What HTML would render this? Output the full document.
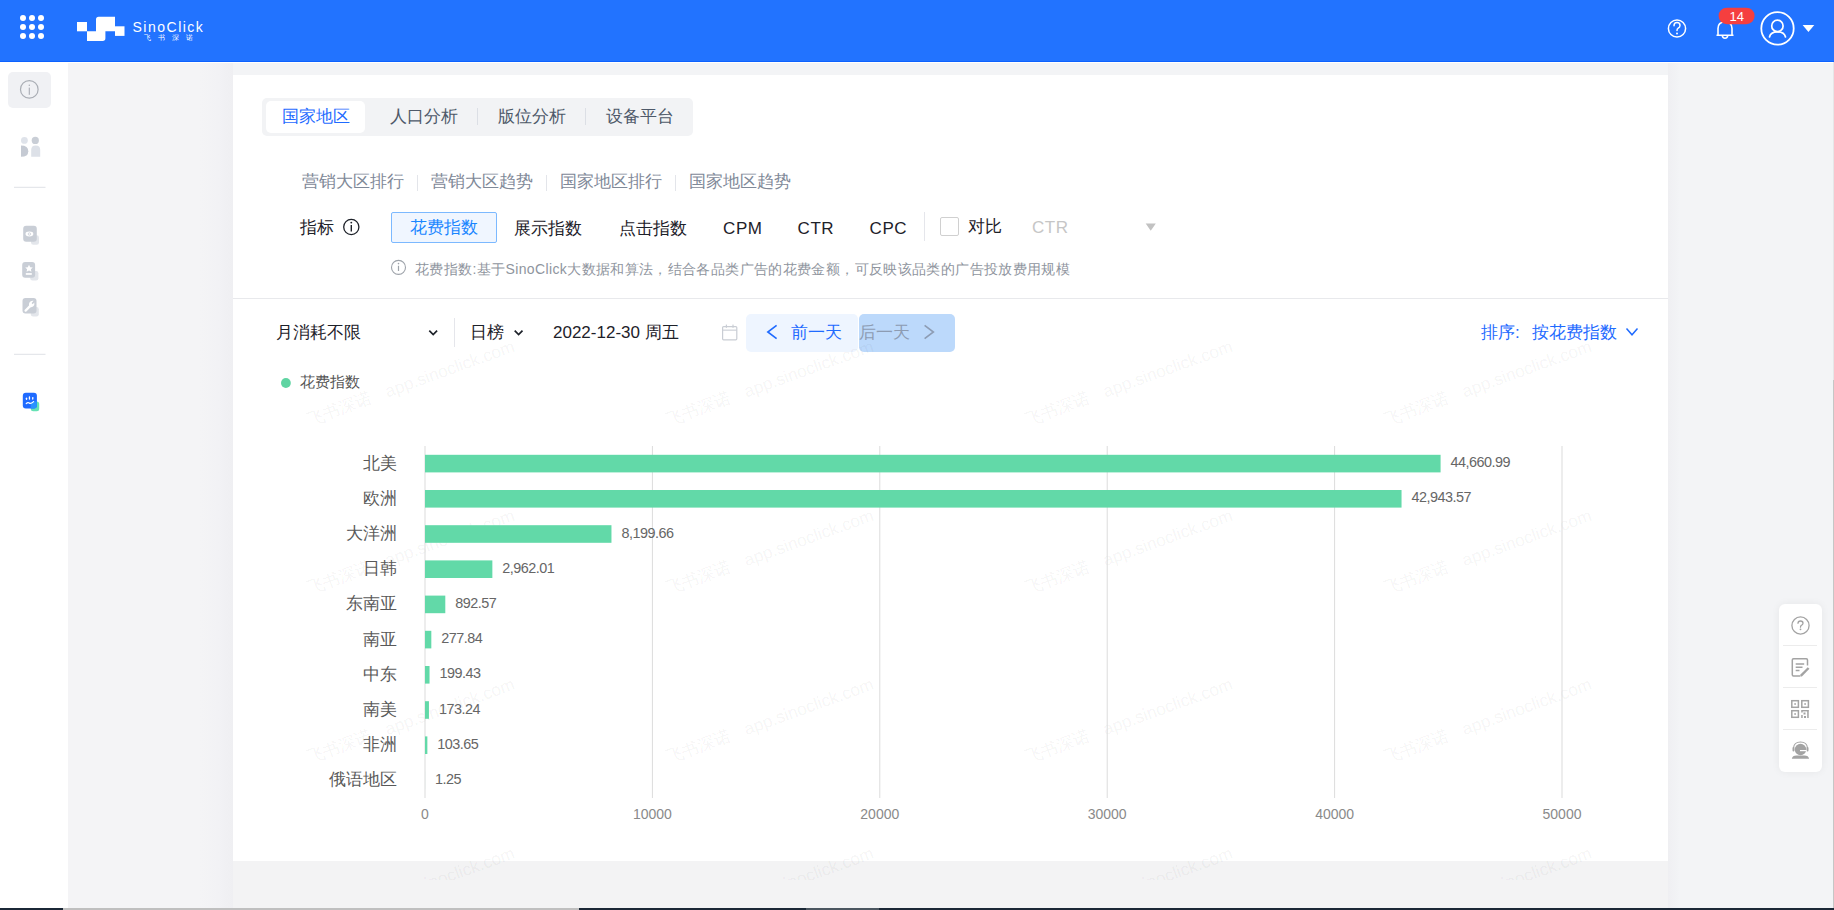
<!DOCTYPE html>
<html><head><meta charset="utf-8">
<style>
*{box-sizing:border-box;margin:0;padding:0}
html,body{width:1834px;height:910px;overflow:hidden;background:#f3f4f6;font-family:"Liberation Sans",sans-serif;color:#1d2129}
.a{position:absolute}
#hdr{left:0;top:0;width:1834px;height:62px;background:#2273ff;border-bottom:1px solid #0d62ff}
#side{left:0;top:62px;width:68px;height:848px;background:#fff}
#strip{left:68px;top:63px;width:165px;height:845px;background:linear-gradient(to right,#f4f4f6 0,#f4f4f6 132px,#f2f2f5 150px,#efeff2 165px)}
#wline{left:0;top:62px;width:1834px;height:1px;background:#fff}
#card{left:233px;top:75px;width:1435px;height:786px;background:#fff}
.t{position:absolute;white-space:nowrap;line-height:1}
svg{position:absolute;overflow:visible}
</style></head><body>
<!-- HEADER -->
<div id="hdr" class="a">
  <svg style="left:0;top:0" width="260" height="62">
    <g fill="#fff">
      <circle cx="23" cy="18" r="3"/><circle cx="32" cy="18" r="3"/><circle cx="41" cy="18" r="3"/>
      <circle cx="23" cy="27" r="3"/><circle cx="32" cy="27" r="3"/><circle cx="41" cy="27" r="3"/>
      <circle cx="23" cy="36" r="3"/><circle cx="32" cy="36" r="3"/><circle cx="41" cy="36" r="3"/>
      <rect x="77" y="22" width="10" height="9.3"/>
      <path d="M87 31.2 H96 V19.5 Q96 16.8 98.7 16.8 H115 V31.2 H105.4 V38.3 Q105.4 41 102.7 41 H87 Z"/>
      <rect x="115" y="26.3" width="9.5" height="9.6"/>
    </g>
  </svg>
  <div class="t" style="left:132.5px;top:20.4px;font-size:14px;color:#fff;letter-spacing:1.5px">SinoClick</div>
  <div class="t" style="left:143.5px;top:34px;font-size:7px;color:#fff;letter-spacing:7.1px">飞书深诺</div>
  <svg style="left:1640px;top:0" width="194" height="62">
    <circle cx="37" cy="28.5" r="8.6" fill="none" stroke="#fff" stroke-width="1.5"/>
    <path d="M34 25.8 Q34 22.6 37 22.6 Q40 22.6 40 25.6 Q40 27.4 38 28.3 Q37 28.8 37 30.4" fill="none" stroke="#fff" stroke-width="1.5" stroke-linecap="round"/>
    <circle cx="37" cy="33.6" r="1" fill="#fff"/>
    <path d="M78 35.3 V28.5 Q78 22 85 22 Q92 22 92 28.5 V35.3 H93.5 M76.5 35.3 H93.5" fill="none" stroke="#fff" stroke-width="1.6" stroke-linejoin="round"/>
    <path d="M82.3 35.5 Q82.5 38.2 85 38.2 Q87.5 38.2 87.7 35.5" fill="none" stroke="#fff" stroke-width="1.6"/>
    <rect x="78.6" y="7.7" width="36" height="16.5" rx="8.25" fill="#f53f3f"/>
    <circle cx="137.5" cy="28.4" r="16.2" fill="none" stroke="#fff" stroke-width="1.8"/>
    <circle cx="137.4" cy="25.9" r="5.7" fill="none" stroke="#fff" stroke-width="1.7"/>
    <path d="M129.5 37 Q130.5 31.8 137.4 31.8 Q144.4 31.8 145.5 37" fill="none" stroke="#fff" stroke-width="1.7" stroke-linecap="round"/>
    <path d="M162.6 24.9 H174.3 L168.45 31.9 Z" fill="#fff"/>
  </svg>
  <div class="t" style="left:1729.5px;top:9.5px;font-size:13px;color:#fff">14</div>
</div>
<div id="side" class="a">
  <div class="a" style="left:8px;top:10px;width:43px;height:36px;background:#f0f1f4;border-radius:5px"></div>
  <svg style="left:0;top:0" width="68" height="400">
    <circle cx="29.3" cy="27.4" r="8.8" fill="none" stroke="#a9adb4" stroke-width="1.2"/>
    <rect x="28.75" y="25.6" width="1.1" height="7.2" fill="#a9adb4"/>
    <circle cx="29.3" cy="23.2" r="0.7" fill="#a9adb4"/>
    <!-- people icon -->
    <circle cx="24.4" cy="78.4" r="3.4" fill="#dfe3ea"/>
    <circle cx="35.3" cy="78.4" r="3.6" fill="#c9ced6"/>
    <path d="M21 83.6 Q28.3 83.6 28.3 89.2 Q28.3 94.8 21 94.8 Z" fill="#c5cad3"/>
    <path d="M31.2 87.8 Q31.2 83.4 35.7 83.4 Q40.2 83.4 40.2 87.8 V94.8 H31.2 Z" fill="#dde1e8"/>
    <rect x="14" y="124.8" width="31.5" height="1" fill="#dfe2e7"/>
    <!-- eye doc -->
    
    <rect x="31" y="173.2" width="8" height="9.6" rx="2.3" fill="#e3e6eb"/>
    <rect x="23.2" y="163.7" width="13.6" height="16.1" rx="3" fill="#c9ced6"/>
    <ellipse cx="29.4" cy="172" rx="3.9" ry="2.4" fill="#fff"/>
    <circle cx="29.4" cy="172" r="1.2" fill="none" stroke="#c9ced6" stroke-width="0.8"/>
    <!-- star doc -->
    <rect x="30.2" y="209" width="8.2" height="9.5" rx="2.3" fill="#e3e6eb"/>
    <rect x="22.2" y="200" width="12.9" height="15.7" rx="3" fill="#c9ced6"/>
    <path d="M29 202.8 L30.2 205.3 L32.8 205.6 L30.9 207.3 L31.4 209.8 L29 208.5 L26.6 209.8 L27.1 207.3 L25.2 205.6 L27.8 205.3 Z" fill="#fff"/>
    <rect x="25.8" y="211.1" width="6" height="1.7" fill="#fff"/>
    <!-- wrench doc -->
    <rect x="30.8" y="245" width="8" height="9.6" rx="2.3" fill="#e3e6eb"/>
    <rect x="22.5" y="236" width="14" height="15.5" rx="3" fill="#c9ced6"/>
    <path d="M25.6 248.6 L29.8 244.4" fill="none" stroke="#fff" stroke-width="2.3" stroke-linecap="round"/><path d="M29.3 245 Q28.2 241.6 30.4 239.6 Q32 238.3 33.6 238.8 L31.6 240.9 L32.6 242.2 L34.3 240.6 Q34.8 242.8 33.3 244.3 Q31.5 245.9 29.3 245 Z" fill="#fff"/>
    <rect x="14" y="291.8" width="31.5" height="1" fill="#dfe2e7"/>
    <!-- face icon -->
    <rect x="30.8" y="339.6" width="8.4" height="9.6" rx="2.5" fill="#66e2b4"/>
    <rect x="22.8" y="330.8" width="14.1" height="15.8" rx="3" fill="#1f6bff"/>
    <path d="M30.8 342.1 Q30.8 339.6 33.3 339.6 H36.9 V343.6 Q36.9 346.6 33.9 346.6 H30.8 Z" fill="#2892ff"/>
    <rect x="25.8" y="335.6" width="1.4" height="2.3" rx="0.7" fill="#fff"/>
    <rect x="28.8" y="334.3" width="1.3" height="3.4" rx="0.6" fill="#fff"/>
    <rect x="32.1" y="334.9" width="1.3" height="2.8" rx="0.6" fill="#fff"/>
    <path d="M26.2 341.6 Q27.8 339.8 29.3 341 Q30.6 342.2 33.6 339.6" fill="none" stroke="#fff" stroke-width="1.2" stroke-linecap="round"/>
  </svg>
</div>
<div id="strip" class="a"></div>
<div id="wline" class="a"></div>
<div class="a" style="left:1668px;top:63px;width:12px;height:845px;background:linear-gradient(to right,#efeff2,#f3f4f6)"></div>
<div class="a" style="left:233px;top:861px;width:1435px;height:47px;background:#f3f3f4"></div>
<div id="card" class="a"></div>
<!-- tabs -->
<div class="a" style="left:262px;top:98px;width:431px;height:38px;background:#f2f3f5;border-radius:5px"></div>
<div class="a" style="left:266px;top:101px;width:99px;height:32px;background:#fff;border-radius:5px"></div>
<div class="t" style="left:282px;top:108px;font-size:17px;color:#1f6bff">国家地区</div>
<div class="t" style="left:390px;top:108px;font-size:17px;color:#4e5969">人口分析</div>
<div class="a" style="left:476.5px;top:108px;width:1px;height:17px;background:#dcdfe5"></div>
<div class="t" style="left:498px;top:108px;font-size:17px;color:#4e5969">版位分析</div>
<div class="a" style="left:584.5px;top:108px;width:1px;height:17px;background:#dcdfe5"></div>
<div class="t" style="left:606px;top:108px;font-size:17px;color:#4e5969">设备平台</div>
<!-- subtabs -->
<div class="t" style="left:302px;top:173px;font-size:17px;color:#7f8998">营销大区排行</div>
<div class="a" style="left:416.5px;top:175px;width:1px;height:16px;background:#e3e5ea"></div>
<div class="t" style="left:431px;top:173px;font-size:17px;color:#7f8998">营销大区趋势</div>
<div class="a" style="left:545.5px;top:175px;width:1px;height:16px;background:#e3e5ea"></div>
<div class="t" style="left:560px;top:173px;font-size:17px;color:#7f8998">国家地区排行</div>
<div class="a" style="left:674.5px;top:175px;width:1px;height:16px;background:#e3e5ea"></div>
<div class="t" style="left:689px;top:173px;font-size:17px;color:#7f8998">国家地区趋势</div>
<!-- indicators -->
<div class="t" style="left:300px;top:218.8px;font-size:17px;color:#1d2129">指标</div>
<svg style="left:0;top:0" width="10" height="10">
  <circle cx="351.3" cy="227" r="7.6" fill="none" stroke="#1d2129" stroke-width="1.3"/>
  <rect x="350.6" y="225" width="1.4" height="6.5" fill="#1d2129"/>
  <circle cx="351.3" cy="222.6" r="0.95" fill="#1d2129"/>
</svg>
<div class="a" style="left:391px;top:212px;width:106px;height:31px;background:#f0f6ff;border:1px solid #7cb9ff;border-radius:2px"></div>
<div class="t" style="left:410px;top:219.3px;font-size:17px;color:#1a86ff">花费指数</div>
<div class="t" style="left:514px;top:220px;font-size:17px;color:#1d2129">展示指数</div>
<div class="t" style="left:619px;top:220px;font-size:17px;color:#1d2129">点击指数</div>
<div class="t" style="left:723px;top:219.5px;font-size:17px;color:#1d2129;letter-spacing:0.6px">CPM</div>
<div class="t" style="left:797.5px;top:219.5px;font-size:17px;color:#1d2129;letter-spacing:0.6px">CTR</div>
<div class="t" style="left:869.5px;top:219.5px;font-size:17px;color:#1d2129;letter-spacing:0.6px">CPC</div>
<div class="a" style="left:924px;top:212px;width:1px;height:28.5px;background:#e5e6eb"></div>
<div class="a" style="left:940px;top:217px;width:19px;height:19px;border:1px solid #d0d0d0;border-radius:2px;background:#fff"></div>
<div class="t" style="left:968px;top:218px;font-size:17px;color:#1d2129">对比</div>
<div class="t" style="left:1032px;top:218.5px;font-size:17px;color:#c6c6c6;letter-spacing:0.5px">CTR</div>
<svg style="left:0;top:0" width="10" height="10"><path d="M1145.7 223.6 H1155.8 L1150.75 230.7 Z" fill="#c2c2c2"/></svg>
<svg style="left:0;top:0" width="10" height="10">
  <circle cx="398.5" cy="267.4" r="7" fill="none" stroke="#9ea3aa" stroke-width="1.1"/>
  <rect x="397.9" y="265.8" width="1.2" height="5.2" fill="#9ea3aa"/>
  <circle cx="398.5" cy="263.6" r="0.8" fill="#9ea3aa"/>
</svg>
<div class="t" style="left:415px;top:261.5px;font-size:14px;letter-spacing:0.37px;color:#8f959e">花费指数:基于SinoClick大数据和算法，结合各品类广告的花费金额，可反映该品类的广告投放费用规模</div>
<div class="a" style="left:233px;top:297.5px;width:1435px;height:1px;background:#e8e9ec"></div>
<!-- filters -->
<div class="t" style="left:276px;top:324px;font-size:17px;color:#1d2129">月消耗不限</div>
<svg style="left:0;top:0" width="10" height="10"><path d="M429.3 330.6 L433.2 334.5 L437.1 330.6" fill="none" stroke="#1d2129" stroke-width="1.7"/></svg>
<div class="a" style="left:454px;top:318px;width:1px;height:28.5px;background:#e5e6eb"></div>
<div class="t" style="left:469.5px;top:324px;font-size:17px;color:#1d2129">日榜</div>
<svg style="left:0;top:0" width="10" height="10"><path d="M514.7 330.6 L518.6 334.5 L522.5 330.6" fill="none" stroke="#1d2129" stroke-width="1.7"/></svg>
<div class="t" style="left:553px;top:324px;font-size:17px;color:#1d2129">2022-12-30 周五</div>
<svg style="left:0;top:0" width="10" height="10">
  <rect x="722.6" y="326.6" width="14.2" height="13.2" rx="1" fill="none" stroke="#c9cdd4" stroke-width="1.2"/>
  <rect x="722.6" y="329.6" width="14.2" height="1.1" fill="#c9cdd4"/>
  <rect x="725.8" y="324.6" width="1.2" height="3.2" fill="#c9cdd4"/>
  <rect x="732.4" y="324.6" width="1.2" height="3.2" fill="#c9cdd4"/>
</svg>
<div class="a" style="left:746px;top:314px;width:112.3px;height:38px;background:#eef5ff;border-radius:5px"></div>
<div class="a" style="left:859px;top:314px;width:95.7px;height:38px;background:#bcd9fb;border-radius:5px"></div>
<svg style="left:0;top:0" width="10" height="10">
  <path d="M776.6 325.3 L767.8 332 L776.6 338.7" fill="none" stroke="#1f6bff" stroke-width="1.6"/>
  <path d="M924.6 325.3 L933.4 332 L924.6 338.7" fill="none" stroke="#8d9cb3" stroke-width="1.6"/>
</svg>
<div class="t" style="left:790.5px;top:324px;font-size:17px;color:#1f6bff">前一天</div>
<div class="t" style="left:859px;top:324px;font-size:17px;color:#8d9cb3">后一天</div>
<div class="t" style="left:1481px;top:324px;font-size:17px;color:#1f6bff">排序:</div>
<div class="t" style="left:1532px;top:324px;font-size:17px;color:#1f6bff">按花费指数</div>
<svg style="left:0;top:0" width="10" height="10"><path d="M1626.5 328.6 L1632 334.8 L1637.5 328.6" fill="none" stroke="#1f6bff" stroke-width="1.5"/></svg>
<!-- legend -->
<svg style="left:0;top:0" width="10" height="10"><circle cx="285.9" cy="383" r="4.9" fill="#5fd4a2"/></svg>
<div class="t" style="left:300px;top:375px;font-size:14.6px;color:#555">花费指数</div>

<!-- right tools -->
<div class="a" style="left:1779px;top:604px;width:43px;height:168px;background:#fff;border-radius:6px;box-shadow:0 0 8px rgba(0,0,0,0.06)"></div>
<svg style="left:0;top:0" width="10" height="10">
  <g fill="none" stroke="#a3a3a3" stroke-width="1.3">
    <circle cx="1800.5" cy="625.5" r="8.6"/>
    <path d="M1798 623.3 Q1798 621 1800.5 621 Q1803 621 1803 623.2 Q1803 624.6 1801.3 625.4 Q1800.5 625.8 1800.5 627.2" stroke-linecap="round"/>
  </g>
  <circle cx="1800.5" cy="629.3" r="0.9" fill="#a3a3a3"/>
  <rect x="1783" y="645" width="34" height="1" fill="#ececec"/>
  <g fill="none" stroke="#a3a3a3" stroke-width="1.5">
    <path d="M1800.5 676 H1793.5 Q1792.3 676 1792.3 674.8 V659.9 Q1792.3 658.7 1793.5 658.7 H1806.3 Q1807.5 658.7 1807.5 659.9 V665.5"/>
    <path d="M1795.7 664 H1804.2 M1795.7 667.3 H1802.5 M1795.7 670.6 H1799.5"/>
    <path d="M1800.8 675.8 L1808.6 668" stroke-width="2.4"/>
  </g>
  <rect x="1783" y="687" width="34" height="1" fill="#ececec"/>
  <g fill="none" stroke="#a3a3a3" stroke-width="1.5">
    <rect x="1791.8" y="700.7" width="6.6" height="6.6"/>
    <rect x="1801.8" y="700.7" width="6.6" height="6.6"/>
    <rect x="1791.8" y="710.7" width="6.6" height="6.6"/>
  </g>
  <g fill="#a3a3a3">
    <rect x="1794.3" y="703.2" width="1.6" height="1.6"/><rect x="1804.3" y="703.2" width="1.6" height="1.6"/><rect x="1794.3" y="713.2" width="1.6" height="1.6"/>
    <rect x="1801.2" y="710" width="1.5" height="2.5"/><rect x="1802" y="710" width="6.5" height="1.4"/><rect x="1807.2" y="710" width="1.5" height="8"/>
    <rect x="1803.5" y="712.5" width="2" height="2"/><rect x="1801.2" y="715" width="1.5" height="3"/><rect x="1804" y="716" width="2" height="2"/>
  </g>
  <rect x="1783" y="729" width="34" height="1" fill="#ececec"/>
  <g fill="#a3a3a3">
    <circle cx="1800.5" cy="749.5" r="5.7"/>
    <path d="M1791.8 758.8 Q1792.3 755.4 1796.5 755.4 H1804.4 Q1808.6 755.4 1809.1 758.8 Z"/>
    <rect x="1792.5" y="747" width="2" height="4.5" rx="1"/>
    <rect x="1806.5" y="747" width="2" height="4.5" rx="1"/>
  </g>
  <path d="M1793.5 748 Q1794 742 1800.5 742 Q1807 742 1807.5 748" fill="none" stroke="#a3a3a3" stroke-width="1.1"/>
  <path d="M1800 750.6 H1806.5" stroke="#fff" stroke-width="1.2"/>
</svg>
<!-- watermark -->
<div class="a" style="left:233px;top:298px;width:1435px;height:582px;overflow:hidden;pointer-events:none">
  <svg style="left:0;top:0" width="1435" height="612">
    <g fill="#000" fill-opacity="0.055" font-size="17">
<text transform="translate(76.5,-41.4) rotate(-19.8)">飞书深诺<tspan x="83" font-size="17.3">app.sinoclick.com</tspan></text>
<text transform="translate(435.5,-41.4) rotate(-19.8)">飞书深诺<tspan x="83" font-size="17.3">app.sinoclick.com</tspan></text>
<text transform="translate(794.5,-41.4) rotate(-19.8)">飞书深诺<tspan x="83" font-size="17.3">app.sinoclick.com</tspan></text>
<text transform="translate(1153.5,-41.4) rotate(-19.8)">飞书深诺<tspan x="83" font-size="17.3">app.sinoclick.com</tspan></text>
<text transform="translate(1512.5,-41.4) rotate(-19.8)">飞书深诺<tspan x="83" font-size="17.3">app.sinoclick.com</tspan></text>
<text transform="translate(76.5,127.5) rotate(-19.8)">飞书深诺<tspan x="83" font-size="17.3">app.sinoclick.com</tspan></text>
<text transform="translate(435.5,127.5) rotate(-19.8)">飞书深诺<tspan x="83" font-size="17.3">app.sinoclick.com</tspan></text>
<text transform="translate(794.5,127.5) rotate(-19.8)">飞书深诺<tspan x="83" font-size="17.3">app.sinoclick.com</tspan></text>
<text transform="translate(1153.5,127.5) rotate(-19.8)">飞书深诺<tspan x="83" font-size="17.3">app.sinoclick.com</tspan></text>
<text transform="translate(1512.5,127.5) rotate(-19.8)">飞书深诺<tspan x="83" font-size="17.3">app.sinoclick.com</tspan></text>
<text transform="translate(76.5,296.4) rotate(-19.8)">飞书深诺<tspan x="83" font-size="17.3">app.sinoclick.com</tspan></text>
<text transform="translate(435.5,296.4) rotate(-19.8)">飞书深诺<tspan x="83" font-size="17.3">app.sinoclick.com</tspan></text>
<text transform="translate(794.5,296.4) rotate(-19.8)">飞书深诺<tspan x="83" font-size="17.3">app.sinoclick.com</tspan></text>
<text transform="translate(1153.5,296.4) rotate(-19.8)">飞书深诺<tspan x="83" font-size="17.3">app.sinoclick.com</tspan></text>
<text transform="translate(1512.5,296.4) rotate(-19.8)">飞书深诺<tspan x="83" font-size="17.3">app.sinoclick.com</tspan></text>
<text transform="translate(76.5,465.3) rotate(-19.8)">飞书深诺<tspan x="83" font-size="17.3">app.sinoclick.com</tspan></text>
<text transform="translate(435.5,465.3) rotate(-19.8)">飞书深诺<tspan x="83" font-size="17.3">app.sinoclick.com</tspan></text>
<text transform="translate(794.5,465.3) rotate(-19.8)">飞书深诺<tspan x="83" font-size="17.3">app.sinoclick.com</tspan></text>
<text transform="translate(1153.5,465.3) rotate(-19.8)">飞书深诺<tspan x="83" font-size="17.3">app.sinoclick.com</tspan></text>
<text transform="translate(1512.5,465.3) rotate(-19.8)">飞书深诺<tspan x="83" font-size="17.3">app.sinoclick.com</tspan></text>
<text transform="translate(76.5,634.2) rotate(-19.8)">飞书深诺<tspan x="83" font-size="17.3">app.sinoclick.com</tspan></text>
<text transform="translate(435.5,634.2) rotate(-19.8)">飞书深诺<tspan x="83" font-size="17.3">app.sinoclick.com</tspan></text>
<text transform="translate(794.5,634.2) rotate(-19.8)">飞书深诺<tspan x="83" font-size="17.3">app.sinoclick.com</tspan></text>
<text transform="translate(1153.5,634.2) rotate(-19.8)">飞书深诺<tspan x="83" font-size="17.3">app.sinoclick.com</tspan></text>
<text transform="translate(1512.5,634.2) rotate(-19.8)">飞书深诺<tspan x="83" font-size="17.3">app.sinoclick.com</tspan></text>
</g>
  </svg>
</div>
<!-- bottom bar -->
<div class="a" style="left:0;top:908px;width:1834px;height:2px;background:#1b2836"></div>
<div class="a" style="left:63px;top:908px;width:516px;height:2px;background:#bfbfbf"></div>
<div class="a" style="left:806px;top:908px;width:73px;height:2px;background:#4b5660"></div>
<div class="a" style="left:1833px;top:62px;width:1px;height:318px;background:#e6e6e8"></div>
<div class="a" style="left:1833px;top:380px;width:1px;height:528px;background:#c6c6c6"></div>
<!-- chart -->
<svg style="left:0;top:0" width="10" height="10">
<rect x="424.50" y="446.0" width="1" height="352" fill="#dcdcdc"/>
<rect x="651.90" y="446.0" width="1" height="352" fill="#dcdcdc"/>
<rect x="879.30" y="446.0" width="1" height="352" fill="#dcdcdc"/>
<rect x="1106.70" y="446.0" width="1" height="352" fill="#dcdcdc"/>
<rect x="1334.10" y="446.0" width="1" height="352" fill="#dcdcdc"/>
<rect x="1561.50" y="446.0" width="1" height="352" fill="#dcdcdc"/>
<rect x="425.00" y="454.80" width="1015.59" height="17.6" fill="#62d9a8"/>
<text x="1450.59" y="467.10" font-size="14.4" letter-spacing="-0.5" fill="#666">44,660.99</text>
<text x="397" y="468.60" font-size="17" fill="#595959" text-anchor="end">北美</text>
<rect x="425.00" y="490.00" width="976.54" height="17.6" fill="#62d9a8"/>
<text x="1411.54" y="502.30" font-size="14.4" letter-spacing="-0.5" fill="#666">42,943.57</text>
<text x="397" y="503.80" font-size="17" fill="#595959" text-anchor="end">欧洲</text>
<rect x="425.00" y="525.20" width="186.46" height="17.6" fill="#62d9a8"/>
<text x="621.46" y="537.50" font-size="14.4" letter-spacing="-0.5" fill="#666">8,199.66</text>
<text x="397" y="539.00" font-size="17" fill="#595959" text-anchor="end">大洋洲</text>
<rect x="425.00" y="560.40" width="67.36" height="17.6" fill="#62d9a8"/>
<text x="502.36" y="572.70" font-size="14.4" letter-spacing="-0.5" fill="#666">2,962.01</text>
<text x="397" y="574.20" font-size="17" fill="#595959" text-anchor="end">日韩</text>
<rect x="425.00" y="595.60" width="20.30" height="17.6" fill="#62d9a8"/>
<text x="455.30" y="607.90" font-size="14.4" letter-spacing="-0.5" fill="#666">892.57</text>
<text x="397" y="609.40" font-size="17" fill="#595959" text-anchor="end">东南亚</text>
<rect x="425.00" y="630.80" width="6.32" height="17.6" fill="#62d9a8"/>
<text x="441.32" y="643.10" font-size="14.4" letter-spacing="-0.5" fill="#666">277.84</text>
<text x="397" y="644.60" font-size="17" fill="#595959" text-anchor="end">南亚</text>
<rect x="425.00" y="666.00" width="4.54" height="17.6" fill="#62d9a8"/>
<text x="439.54" y="678.30" font-size="14.4" letter-spacing="-0.5" fill="#666">199.43</text>
<text x="397" y="679.80" font-size="17" fill="#595959" text-anchor="end">中东</text>
<rect x="425.00" y="701.20" width="3.94" height="17.6" fill="#62d9a8"/>
<text x="438.94" y="713.50" font-size="14.4" letter-spacing="-0.5" fill="#666">173.24</text>
<text x="397" y="715.00" font-size="17" fill="#595959" text-anchor="end">南美</text>
<rect x="425.00" y="736.40" width="2.36" height="17.6" fill="#62d9a8"/>
<text x="437.36" y="748.70" font-size="14.4" letter-spacing="-0.5" fill="#666">103.65</text>
<text x="397" y="750.20" font-size="17" fill="#595959" text-anchor="end">非洲</text>
<rect x="425.00" y="771.60" width="0.03" height="17.6" fill="#62d9a8"/>
<text x="435.03" y="783.90" font-size="14.4" letter-spacing="-0.5" fill="#666">1.25</text>
<text x="397" y="785.40" font-size="17" fill="#595959" text-anchor="end">俄语地区</text>
<text x="425.00" y="818.5" font-size="14" fill="#8a8a8a" text-anchor="middle">0</text>
<text x="652.40" y="818.5" font-size="14" fill="#8a8a8a" text-anchor="middle">10000</text>
<text x="879.80" y="818.5" font-size="14" fill="#8a8a8a" text-anchor="middle">20000</text>
<text x="1107.20" y="818.5" font-size="14" fill="#8a8a8a" text-anchor="middle">30000</text>
<text x="1334.60" y="818.5" font-size="14" fill="#8a8a8a" text-anchor="middle">40000</text>
<text x="1562.00" y="818.5" font-size="14" fill="#8a8a8a" text-anchor="middle">50000</text>
</svg>
</body></html>
